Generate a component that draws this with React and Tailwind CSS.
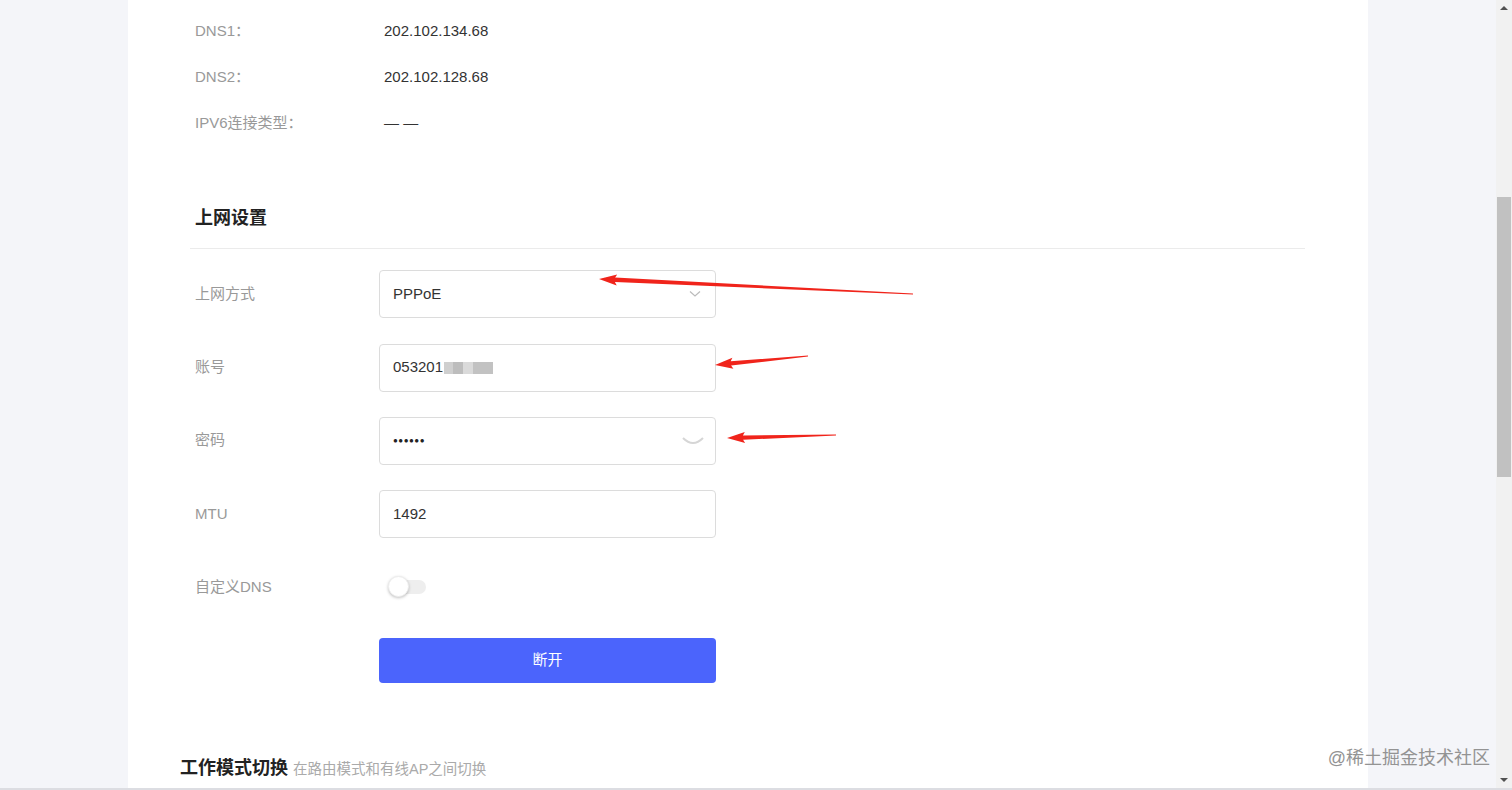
import React from 'react';

const font = { fontFamily: '"Liberation Sans", "Noto Sans CJK SC", sans-serif' };

// red annotation arrow as a polygon, tail -> tip
function arrowPoints(tx, ty, px, py) {
  const dx = px - tx;
  const dy = py - ty;
  const len = Math.hypot(dx, dy);
  const ux = dx / len;
  const uy = dy / len;
  const nx = -uy;
  const ny = ux;
  const headLen = 16;
  const bx = px - ux * headLen;
  const by = py - uy * headLen;
  const pts = [
    [tx + nx * 0.5, ty + ny * 0.5],
    [bx + nx * 2.2, by + ny * 2.2],
    [bx - ux * 2 + nx * 5.5, by - uy * 2 + ny * 5.5],
    [px, py],
    [bx - ux * 2 - nx * 5.5, by - uy * 2 - ny * 5.5],
    [bx - nx * 2.2, by - ny * 2.2],
    [tx - nx * 0.5, ty - ny * 0.5],
  ];
  return pts.map((p) => p.map((v) => v.toFixed(1)).join(',')).join(' ');
}

function InfoRow({ label, value }) {
  return (
    <div className="flex h-[46px] items-center pl-[5px] text-[15px]">
      <span className="w-[189px] text-[#999]">{label}</span>
      <span className="text-[#333]">{value}</span>
    </div>
  );
}

function FormRow({ label, children, className = 'mb-[25.5px]' }) {
  return (
    <div className={`flex h-[48px] items-center pl-[5px] ${className}`}>
      <span className="w-[184px] text-[15px] text-[#999]">{label}</span>
      {children}
    </div>
  );
}

function Field({ children }) {
  return (
    <div className="flex h-[48px] w-[337px] items-center rounded-[4px] border border-[#dcdcdc] bg-white pl-[13px] pr-[14px] text-[15px] text-[#333]">
      {children}
    </div>
  );
}

export default function App() {
  return (
    <div className="relative flex h-[790px] w-[1512px] overflow-hidden bg-[#f4f5f9]" style={font}>
      {/* main page */}
      <div className="flex h-full flex-1 flex-col">
        <div className="ml-[128px] h-full w-[1240px] bg-white pl-[62px] pr-[63px] pt-[8px]">
          <InfoRow label="DNS1：" value="202.102.134.68" />
          <InfoRow label="DNS2：" value="202.102.128.68" />
          <InfoRow label="IPV6连接类型：" value="— —" />

          <div className="mt-[59px] border-b border-[#ebebeb] pb-[17px] pl-[5px]">
            <h2 className="text-[18px] font-bold leading-[26px] text-[#222]">上网设置</h2>
          </div>

          <div className="mt-[21px]">
            <FormRow label="上网方式">
              <Field>
                <span className="flex-1">PPPoE</span>
                <svg width="12" height="8" viewBox="0 0 12 8">
                  <path d="M1 1.5 L6 6 L11 1.5" fill="none" stroke="#bbb" strokeWidth="1.2" />
                </svg>
              </Field>
            </FormRow>
            <FormRow label="账号" className="mb-[25px]">
              <Field>
                <span>053201</span>
                <span className="ml-[1px] h-[12px] w-[9px] bg-[#cfcfcf]" />
                <span className="h-[12px] w-[10px] bg-[#bdbdbd]" />
                <span className="h-[12px] w-[10px] bg-[#dadada]" />
                <span className="h-[12px] w-[20px] bg-[#c2c2c2]" />
              </Field>
            </FormRow>
            <FormRow label="密码">
              <Field>
                <span className="flex-1 text-[8px] tracking-[0.5px] text-[#222]">●●●●●●</span>
                <svg width="24" height="10" viewBox="0 0 24 10" className="mr-[-4px]">
                  <path d="M2 2 Q12 12 22 2" fill="none" stroke="#d6d6d6" strokeWidth="2" />
                </svg>
              </Field>
            </FormRow>
            <FormRow label="MTU" className="mb-[25px]">
              <Field>
                <span>1492</span>
              </Field>
            </FormRow>
            <FormRow label="自定义DNS" className="mb-[27px]">
              <div className="relative ml-[9px] flex h-[22px] w-[40px] items-center">
                <div className="ml-[2px] h-[14px] w-[36px] rounded-full bg-[#eeeeee]" />
                <div className="absolute left-0 top-0 h-[21px] w-[21px] rounded-full border border-[#eee] bg-white shadow-[0_1px_3px_rgba(0,0,0,0.25)]" />
              </div>
            </FormRow>
            <div className="flex pl-[189px]">
              <button className="h-[45px] w-[337px] rounded-[4px] bg-[#4b64fc] text-[15px] text-white">断开</button>
            </div>
          </div>

          <div className="mt-[72px] ml-[-10px] flex items-baseline">
            <h2 className="text-[18px] font-bold leading-[26px] text-[#222]">工作模式切换</h2>
            <span className="ml-[5px] text-[14.5px] text-[#aaa]">在路由模式和有线AP之间切换</span>
          </div>
        </div>
      </div>

      {/* scrollbar */}
      <div className="flex h-full w-[16px] flex-col items-center bg-[#f1f1f1]">
        <div className="mt-[6px] h-0 w-0 border-x-[4px] border-b-[4px] border-x-transparent border-b-[#505050]" />
        <div className="mt-[187px] h-[280px] w-[14px] bg-[#c1c1c1]" />
        <div className="mt-auto mb-[8px] h-0 w-0 border-x-[4px] border-t-[4px] border-x-transparent border-t-[#505050]" />
      </div>

      {/* bottom edge */}
      <div className="absolute bottom-0 left-0 h-[2px] w-full bg-[#dcdde2]" />

      {/* watermark */}
      <div className="absolute bottom-[18px] right-[22px] text-[18px] text-[#939393]">@稀土掘金技术社区</div>

      {/* annotation arrows */}
      <svg className="pointer-events-none absolute left-0 top-0" width="1512" height="790">
        <polygon points={arrowPoints(913, 294, 599, 279)} fill="#f0241b" />
        <polygon points={arrowPoints(808, 356, 715, 365)} fill="#f0241b" />
        <polygon points={arrowPoints(836, 435, 727, 438)} fill="#f0241b" />
      </svg>
    </div>
  );
}
